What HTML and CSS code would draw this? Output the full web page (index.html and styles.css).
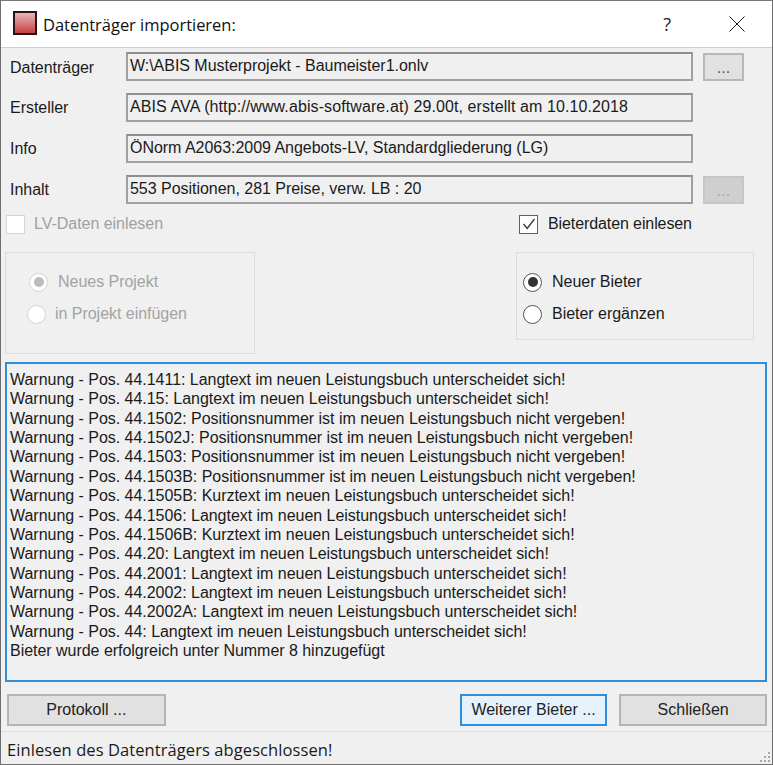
FILE: index.html
```html
<!DOCTYPE html>
<html lang="de">
<head>
<meta charset="utf-8">
<title>Datenträger importieren</title>
<link rel="stylesheet" href="styles.css">
</head>
<body>
<div class="window">
  <header class="titlebar">
    <span class="app-icon"></span>
    <span class="title">Datenträger importieren:</span>
    <span class="help">?</span>
    <svg class="close" width="16" height="16" viewBox="0 0 16 16"><path d="M0.5 0.5L15.5 15.5M15.5 0.5L0.5 15.5" stroke="#1a1a1a" stroke-width="1" fill="none"/></svg>
  </header>
  <main class="content">
    <div class="fields">
      <div class="row"><span class="label first-label">Datenträger</span><div class="field">W:\ABIS Musterprojekt - Baumeister1.onlv</div><button class="dots">...</button></div>
      <div class="row"><span class="label">Ersteller</span><div class="field wide">ABIS AVA (http://www.abis-software.at) 29.00t, erstellt am 10.10.2018</div></div>
      <div class="row"><span class="label">Info</span><div class="field">ÖNorm A2063:2009 Angebots-LV, Standardgliederung (LG)</div></div>
      <div class="row"><span class="label">Inhalt</span><div class="field">553 Positionen, 281 Preise, verw. LB : 20</div><button class="dots disabled">...</button></div>
    </div>
    <div class="options">
      <div class="option-col left">
        <div class="check off"><span class="box"></span>LV-Daten einlesen</div>
        <div class="group left-group off">
          <div class="radio first indent"><span class="dot selected"></span>Neues Projekt</div>
          <div class="radio"><span class="dot"></span>in Projekt einfügen</div>
        </div>
      </div>
      <div class="option-col right">
        <div class="check"><span class="box"><svg width="14" height="14" viewBox="0 0 14 14"><path d="M1.5 7L5.2 11.5L12.5 2" stroke="#333" stroke-width="1.3" fill="none"/></svg></span>Bieterdaten einlesen</div>
        <div class="group right-group">
          <div class="radio first"><span class="dot selected"></span>Neuer Bieter</div>
          <div class="radio"><span class="dot"></span>Bieter ergänzen</div>
        </div>
      </div>
    </div>
    <div class="log">
      <div>Warnung - Pos. 44.1411: Langtext im neuen Leistungsbuch unterscheidet sich!</div>
      <div>Warnung - Pos. 44.15: Langtext im neuen Leistungsbuch unterscheidet sich!</div>
      <div>Warnung - Pos. 44.1502: Positionsnummer ist im neuen Leistungsbuch nicht vergeben!</div>
      <div>Warnung - Pos. 44.1502J: Positionsnummer ist im neuen Leistungsbuch nicht vergeben!</div>
      <div>Warnung - Pos. 44.1503: Positionsnummer ist im neuen Leistungsbuch nicht vergeben!</div>
      <div>Warnung - Pos. 44.1503B: Positionsnummer ist im neuen Leistungsbuch nicht vergeben!</div>
      <div>Warnung - Pos. 44.1505B: Kurztext im neuen Leistungsbuch unterscheidet sich!</div>
      <div>Warnung - Pos. 44.1506: Langtext im neuen Leistungsbuch unterscheidet sich!</div>
      <div>Warnung - Pos. 44.1506B: Kurztext im neuen Leistungsbuch unterscheidet sich!</div>
      <div>Warnung - Pos. 44.20: Langtext im neuen Leistungsbuch unterscheidet sich!</div>
      <div>Warnung - Pos. 44.2001: Langtext im neuen Leistungsbuch unterscheidet sich!</div>
      <div>Warnung - Pos. 44.2002: Langtext im neuen Leistungsbuch unterscheidet sich!</div>
      <div>Warnung - Pos. 44.2002A: Langtext im neuen Leistungsbuch unterscheidet sich!</div>
      <div>Warnung - Pos. 44: Langtext im neuen Leistungsbuch unterscheidet sich!</div>
      <div>Bieter wurde erfolgreich unter Nummer 8 hinzugefügt</div>
    </div>
    <div class="actions">
      <button class="btn protokoll">Protokoll ...</button>
      <button class="btn focus">Weiterer Bieter ...</button>
      <button class="btn">Schließen</button>
    </div>
  </main>
  <footer class="status">
    <span>Einlesen des Datenträgers abgeschlossen!</span>
    <svg class="grip" width="12" height="12" viewBox="0 0 12 12" fill="#a8a8a8"><rect x="9" y="1" width="2" height="2"/><rect x="5" y="5" width="2" height="2"/><rect x="9" y="5" width="2" height="2"/><rect x="1" y="9" width="2" height="2"/><rect x="5" y="9" width="2" height="2"/><rect x="9" y="9" width="2" height="2"/></svg>
  </footer>
</div>
</body>
</html>
```
FILE: styles.css
```css
* { box-sizing: border-box; }
html, body { margin: 0; padding: 0; }
body {
  width: 773px;
  height: 765px;
  overflow: hidden;
  font-family: "Liberation Sans", Arial, sans-serif;
  font-size: 16px;
  letter-spacing: -0.03px;
  color: #1a1a1a;
}
.window {
  width: 773px;
  height: 765px;
  display: flex;
  flex-direction: column;
  background: #f0f0f0;
  border: 1px solid #6f6f6f;
  border-top-color: #777;
}
.titlebar {
  height: 47px;
  flex: none;
  display: flex;
  align-items: center;
  background: #fff;
  border-bottom: 1px solid #d0d0d0;
  padding-left: 12px;
}
.app-icon {
  width: 24px;
  height: 24px;
  margin-bottom: 2px;
  border: 2px solid #2a1416;
  background: linear-gradient(#e8b4b4, #d9888a 40%, #c84043);
}
.title {
  margin-left: 6px;
  font-family: "Open Sans", sans-serif;
  font-size: 16.5px;
  color: #111;
  flex: 1;
}
.help {
  font-family: "Open Sans", sans-serif;
  font-size: 18px;
  color: #222;
  margin-right: 58px;
}
.close { margin-right: 27px; }
.content {
  flex: 1;
  display: flex;
  flex-direction: column;
  padding: 4px 5px 0 4px;
}
.fields { display: flex; flex-direction: column; gap: 12px; }
.row { display: flex; align-items: center; height: 29px; }
.label { width: 121px; padding-left: 5px; flex: none; }
.first-label { padding-top: 3px; }
.field {
  width: 567px;
  height: 29px;
  flex: none;
  border: 2px solid #a0a0a0;
  border-top-color: #8f8f8f;
  padding: 2px 0 0 2px;
  line-height: 20px;
  white-space: nowrap;
}
.field.wide { letter-spacing: 0.1px; }
.dots {
  width: 41px;
  height: 28px;
  margin: 1px 0 0 10px;
  flex: none;
  background: #e1e1e1;
  border: 2px solid #b8b8b8;
  font: inherit;
  color: #555;
  padding: 0;
  line-height: 26px;
}
.dots.disabled { background: #cfcfcf; border-color: #c6c6c6; color: #a8a8a8; }
.options { display: flex; justify-content: space-between; margin-top: 10px; margin-right: 13px; }
.option-col { display: flex; flex-direction: column; }
.check { display: flex; align-items: center; height: 20px; }
.left .check { padding-left: 1px; }
.box {
  width: 19px;
  height: 19px;
  border: 1.5px solid #5f5f5f;
  background: #fff;
  margin-right: 9px;
  display: flex;
  align-items: center;
  justify-content: center;
}
.right .check { margin-left: 3px; letter-spacing: -0.1px; }
.right .box { margin-right: 10px; }
.check.off { color: #a0a0a0; }
.check.off .box { border-color: #d4d4d4; }
.group { margin-top: 18px; border: 1.5px solid #dcdcdc; padding: 0 0 0 20px; }
.left-group { width: 250px; height: 102px; color: #a3a3a3; padding-left: 21px; }
.right-group { width: 238px; height: 88px; padding-left: 6px; align-self: flex-start; }
.radio { display: flex; align-items: center; height: 20px; margin-top: 12px; }
.radio.first { margin-top: 19px; }
.radio.indent { margin-left: 2px; }
.dot {
  width: 19px;
  height: 19px;
  border-radius: 50%;
  border: 1.5px solid #555;
  background: #fff;
  margin-right: 10px;
  flex: none;
  display: flex;
  align-items: center;
  justify-content: center;
}
.dot.selected::after {
  content: "";
  width: 10px;
  height: 10px;
  border-radius: 50%;
  background: #333;
}
.off .dot { border-color: #d4d4d4; margin-right: 9px; }
.off .indent .dot { margin-right: 10px; }
.off .dot.selected::after { background: #bcbcbc; }
.left { height: 140px; }
.log {
  height: 320px;
  flex: none;
  margin-top: 8px;
  border: 2px solid #2f8fdb;
  padding: 6px 3px 0;
  line-height: 19.36px;
  white-space: nowrap;
  color: #1a1a1a;
}
.actions {
  display: flex;
  gap: 12px;
  margin-top: 12px;
  padding-left: 2px;
}
.btn {
  width: 148px;
  height: 32px;
  background: #e1e1e1;
  border: 2px solid #b4b4b4;
  font: inherit;
  color: #222;
  padding: 0;
}
.btn.protokoll { width: 159px; margin-right: 282px; }
.btn.focus { background: #e5f1fb; border-color: #2f8fdb; }
.status {
  height: 33px;
  flex: none;
  margin-top: 5px;
  border-top: 1.5px solid #dedede;
  display: flex;
  align-items: center;
  justify-content: space-between;
  padding: 2px 1px 0 6px;
  font-family: "Open Sans", sans-serif;
  font-size: 16.5px;
  letter-spacing: 0.08px;
}
.grip { align-self: flex-end; margin-bottom: 1px; }
```
